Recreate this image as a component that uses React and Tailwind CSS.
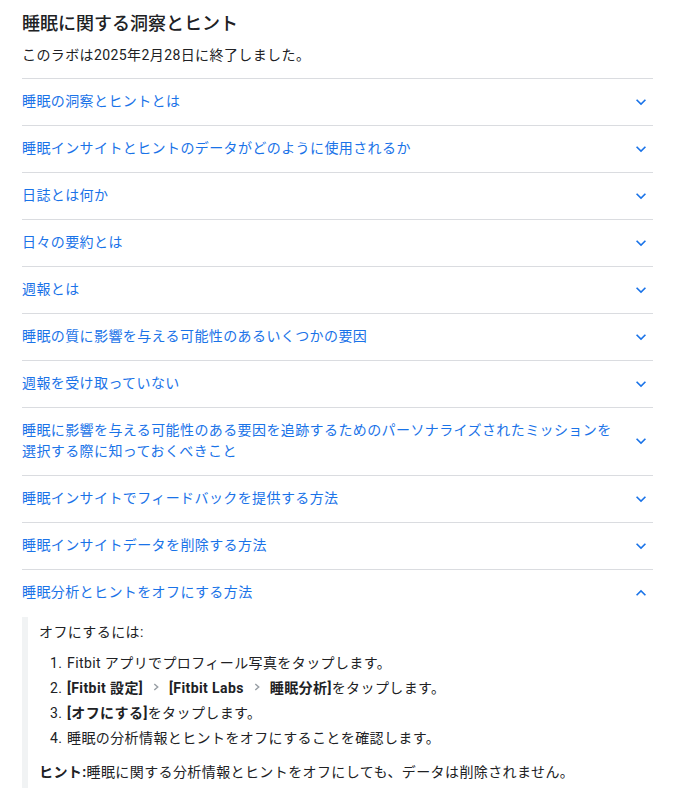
import React from "react";

const items = [
  "睡眠の洞察とヒントとは",
  "睡眠インサイトとヒントのデータがどのように使用されるか",
  "日誌とは何か",
  "日々の要約とは",
  "週報とは",
  "睡眠の質に影響を与える可能性のあるいくつかの要因",
  "週報を受け取っていない",
  "睡眠に影響を与える可能性のある要因を追跡するためのパーソナライズされたミッションを選択する際に知っておくべきこと",
  "睡眠インサイトでフィードバックを提供する方法",
  "睡眠インサイトデータを削除する方法",
];

function Chevron({ up }) {
  return (
    <svg width="20" height="20" viewBox="0 0 24 24" className="shrink-0" aria-hidden="true">
      {up ? (
        <path d="M7.41 15.41L12 10.83l4.59 4.58L18 14l-6-6-6 6z" fill="#1a73e8" />
      ) : (
        <path d="M16.59 8.59L12 13.17 7.41 8.59 6 10l6 6 6-6z" fill="#1a73e8" />
      )}
    </svg>
  );
}

function Sep() {
  return (
    <svg width="16" height="16" viewBox="0 0 16 16" className="inline-block mx-[5px] align-[-2px]" aria-hidden="true">
      <path d="M6.3 5l3.4 3-3.4 3" fill="none" stroke="#9aa0a6" strokeWidth="1.5" />
    </svg>
  );
}

function Row({ title }) {
  return (
    <div className="flex items-center justify-between border-b border-[#dadce0] pt-[12px] pb-[13px] pr-[2px]">
      <div className="text-[14px] leading-[21px] tracking-[0.4px] text-[#1a73e8] pr-[10px]">{title}</div>
      <Chevron />
    </div>
  );
}

export default function App() {
  return (
    <div
      className="bg-white pl-[22px] pr-[24px] text-[#202124]"
      style={{ fontFamily: 'Roboto, "Noto Sans CJK JP", "Noto Sans", sans-serif' }}
    >
      <h1 className="pt-[10px] text-[18px] leading-[28px] font-medium">睡眠に関する洞察とヒント</h1>
      <p className="mt-[6px] text-[14px] leading-[22px] tracking-[0.4px]">このラボは2025年2月28日に終了しました。</p>
      <div className="mt-[12px] border-t border-[#dadce0]">
        {items.map((t) => (
          <Row key={t} title={t} />
        ))}
        <div className="flex items-center justify-between pt-[12px] pb-[14px] pr-[2px]">
          <div className="text-[14px] leading-[21px] tracking-[0.4px] text-[#1a73e8]">睡眠分析とヒントをオフにする方法</div>
          <Chevron up />
        </div>
        <div className="border-l-[6px] border-[#f1f3f4] pl-[11px] pt-[4px] pb-[5px] text-[14px] tracking-[0.4px]">
          <p className="leading-[22px]">オフにするには:</p>
          <ol className="mt-[8px] pl-[11px]">
            <li className="flex leading-[25px]">
              <span className="w-[17px] shrink-0">1.</span>
              <span>Fitbit アプリでプロフィール写真をタップします。</span>
            </li>
            <li className="flex leading-[25px]">
              <span className="w-[17px] shrink-0">2.</span>
              <span>
                <b className="font-bold">[Fitbit 設定]</b>
                <Sep />
                <b className="font-bold">[Fitbit Labs</b>
                <Sep />
                <b className="font-bold">睡眠分析]</b>をタップします。
              </span>
            </li>
            <li className="flex leading-[25px]">
              <span className="w-[17px] shrink-0">3.</span>
              <span>
                <b className="font-bold">[オフにする]</b>をタップします。
              </span>
            </li>
            <li className="flex leading-[25px]">
              <span className="w-[17px] shrink-0">4.</span>
              <span>睡眠の分析情報とヒントをオフにすることを確認します。</span>
            </li>
          </ol>
          <p className="mt-[10px] leading-[22px]">
            <b className="font-bold">ヒント:</b>睡眠に関する分析情報とヒントをオフにしても、データは削除されません。
          </p>
        </div>
      </div>
    </div>
  );
}
